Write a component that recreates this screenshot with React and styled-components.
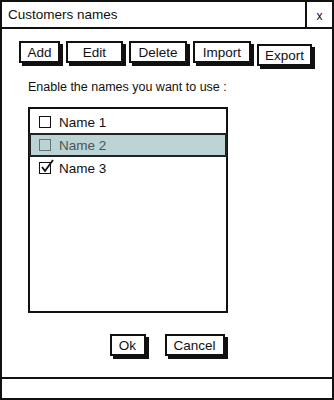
import React from "react";
import styled, { createGlobalStyle } from "styled-components";

const Global = createGlobalStyle`
  html, body {
    margin: 0;
    padding: 0;
    background: #fff;
  }
  * {
    box-sizing: border-box;
  }
`;

const Window = styled.div`
  width: 334px;
  height: 400px;
  border: 2px solid #111;
  display: flex;
  flex-direction: column;
  font-family: "Liberation Sans", Arial, sans-serif;
  color: #111;
  background: #fff;
`;

const TitleBar = styled.div`
  display: flex;
  height: 27px;
  border-bottom: 2px solid #111;
`;

const Title = styled.div`
  flex: 1;
  font-size: 13.5px;
  padding: 5px 0 0 6px;
`;

const CloseBtn = styled.div`
  width: 27px;
  border-left: 2px solid #111;
  font-size: 12px;
  display: flex;
  align-items: center;
  justify-content: center;
  padding-top: 3px;
  box-shadow: 0 2px 0 #111;
`;

const Body = styled.div`
  flex: 1;
  display: flex;
  flex-direction: column;
  padding: 12px 0 0 17px;
`;

const Toolbar = styled.div`
  display: flex;
  gap: 6px;
`;

const Button = styled.div`
  width: ${(p) => p.$w}px;
  height: 22px;
  margin-top: ${(p) => p.$dy || 0}px;
  border: 2px solid #111;
  background: #fff;
  box-shadow: 3px 3px 0 #111;
  font-size: 13.5px;
  display: flex;
  align-items: center;
  justify-content: center;
  flex-shrink: 0;
`;

const Label = styled.div`
  margin: 14px 0 0 9px;
  font-size: 12.5px;
`;

const ListBox = styled.div`
  margin: 13px 0 0 9px;
  width: 200px;
  height: 206px;
  border: 2px solid #111;
  padding-top: 2px;
`;

const Row = styled.div`
  height: ${(p) => (p.$selected ? 24 : 22)}px;
  display: flex;
  align-items: center;
  gap: 8px;
  padding-left: ${(p) => (p.$selected ? 8 : 9)}px;
  font-size: 13.5px;
  margin: ${(p) => (p.$selected ? "0 -1px" : "0")};
  background: ${(p) => (p.$selected ? "#bcd3d5" : "transparent")};
  border: ${(p) => (p.$selected ? "2px solid #222" : "none")};
  color: ${(p) => (p.$selected ? "#4a5656" : "#111")};
`;

const Box = styled.span`
  width: 12px;
  height: 12px;
  border: 1.5px solid ${(p) => (p.$muted ? "#667272" : "#111")};
  position: relative;
  flex-shrink: 0;
  svg {
    position: absolute;
    left: 0;
    top: -4px;
  }
`;

const Footer = styled.div`
  display: flex;
  justify-content: center;
  gap: 19px;
  margin: 21px 0 0 -17px;
`;

const StatusBar = styled.div`
  height: 21px;
  border-top: 2px solid #111;
`;

function Check() {
  return (
    <svg width="14" height="14" viewBox="0 0 14 14">
      <path d="M2 8 L5 12 L13 1" fill="none" stroke="#111" strokeWidth="1.8" />
    </svg>
  );
}

const names = [
  { name: "Name 1" },
  { name: "Name 2", selected: true },
  { name: "Name 3", checked: true },
];

export default function App() {
  return (
    <>
      <Global />
      <Window>
        <TitleBar>
          <Title>Customers names</Title>
          <CloseBtn>x</CloseBtn>
        </TitleBar>
        <Body>
          <Toolbar>
            <Button $w={41}>Add</Button>
            <Button $w={57}>Edit</Button>
            <Button $w={58}>Delete</Button>
            <Button $w={58}>Import</Button>
            <Button $w={55} $dy={3}>Export</Button>
          </Toolbar>
          <Label>Enable the names you want to use :</Label>
          <ListBox>
            {names.map((n) => (
              <Row key={n.name} $selected={n.selected}>
                <Box $muted={n.selected}>{n.checked && <Check />}</Box>
                {n.name}
              </Row>
            ))}
          </ListBox>
          <Footer>
            <Button $w={36}>Ok</Button>
            <Button $w={60}>Cancel</Button>
          </Footer>
        </Body>
        <StatusBar />
      </Window>
    </>
  );
}
